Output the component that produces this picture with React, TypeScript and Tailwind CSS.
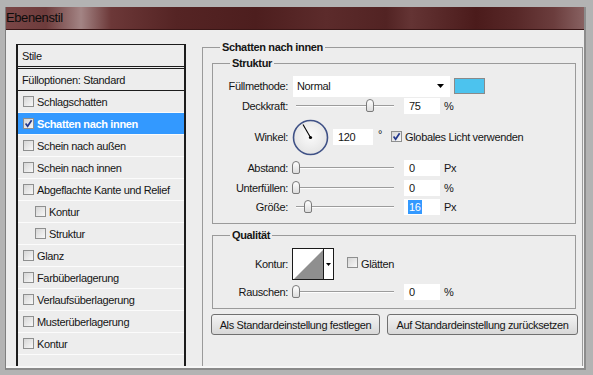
import React from "react";

function Checkbox({ checked = false }: { checked?: boolean }) {
  return (
    <span className="inline-flex h-[11px] w-[11px] shrink-0 items-center justify-center border border-[#8e8f8f] bg-[linear-gradient(135deg,#d6d6d6,#f8f8f8)]">
      {checked && (
        <svg viewBox="0 0 9 9" className="h-[9px] w-[9px]">
          <path d="M1.6 4.6 L3.6 7.2 L7.6 1.2" stroke="#22378c" strokeWidth="1.7" fill="none" />
        </svg>
      )}
    </span>
  );
}

const items: { label: string; checked?: boolean; selected?: boolean; indent?: boolean }[] = [
  { label: "Schlagschatten" },
  { label: "Schatten nach innen", checked: true, selected: true },
  { label: "Schein nach außen" },
  { label: "Schein nach innen" },
  { label: "Abgeflachte Kante und Relief" },
  { label: "Kontur", indent: true },
  { label: "Struktur", indent: true },
  { label: "Glanz" },
  { label: "Farbüberlagerung" },
  { label: "Verlaufsüberlagerung" },
  { label: "Musterüberlagerung" },
  { label: "Kontur" },
];

function Slider({ thumb }: { thumb: string }) {
  return (
    <div className="relative ml-[4px] h-[14px] w-[106px] shrink-0">
      <div className="absolute left-[4px] right-[4px] top-[6px] h-[2px] border-t border-b border-t-[#9c9c9c] border-b-[#fdfdfd]" />
      <div
        className={
          "absolute top-0 h-[13px] w-[8px] rounded-t-[4px] rounded-b-[2px] border border-[#7a7a7a] bg-[linear-gradient(#ffffff,#dcdcdc)] " +
          thumb
        }
      />
    </div>
  );
}

function NumInput({ value, selected = false }: { value: string; selected?: boolean }) {
  return (
    <div className="ml-[6px] flex h-[16px] w-[36px] shrink-0 items-center bg-white pl-[4px]">
      {selected ? <span className="bg-[#3399ff] px-[1px] text-white">{value}</span> : <span className="pl-[1px]">{value}</span>}
    </div>
  );
}

function Label({ children }: { children: React.ReactNode }) {
  return <div className="w-[75px] shrink-0 text-right">{children}</div>;
}

function SliderRow({ label, thumb, value, unit, selected, cls }: { label: string; thumb: string; value: string; unit: string; selected?: boolean; cls: string }) {
  return (
    <div className={"flex h-[18px] items-center " + cls}>
      <Label>{label}</Label>
      <Slider thumb={thumb} />
      <NumInput value={value} selected={selected} />
      <span className="ml-[4px]">{unit}</span>
    </div>
  );
}

function DownArrow() {
  return (
    <svg width="7" height="4" viewBox="0 0 7 4">
      <polygon points="0,0 7,0 3.5,4" fill="#000" />
    </svg>
  );
}

export default function App() {
  return (
    <div className="flex h-[375px] w-[593px] flex-col overflow-hidden bg-[#b3b3b3] pb-[5px] pl-[5px] pr-[7px] pt-[7px] text-[11px] leading-[14px] tracking-[-0.35px] text-[#151515] [font-family:'Liberation_Sans',Arial,sans-serif]">
      <div className="flex flex-1 flex-col overflow-hidden border-b-2 border-l border-r-2 border-b-[#8a8a8a] border-l-[#7f7f7f] border-r-[#8c8c8c]">
        {/* title bar */}
        <div className="flex h-[23px] shrink-0 items-center overflow-hidden border-b border-[#3a1616] bg-[linear-gradient(90deg,#7a4646_0px,#6e3c3c_40px,#a38484_75px,#6c3838_105px,#552424_170px,#4d1e1e_250px,#5c2b2b_320px,#522323_380px,#643434_405px,#4b1b1b_470px,#582828_510px,#6b3d3d_548px,#8a6464_580px)]">
          <span className="ml-[0px] text-[13px] tracking-[-0.4px] text-[#0c0c0c]">Ebenenstil</span>
        </div>
        {/* body */}
        <div className="flex flex-1 items-start overflow-hidden border-b-2 border-[#f7f7f7] bg-[#ededed]">
          {/* left list */}
          <div className="ml-[10px] mt-[14px] h-[340px] w-[170px] shrink-0 border-l-2 border-r-2 border-t border-[#1c1c1c]">
            <div className="flex h-[22px] items-center border-b border-[#1c1c1c] pl-[4px]">Stile</div>
            <div className="mt-[1px] flex h-[23px] items-center border-b border-t border-[#1c1c1c] pl-[4px]">Fülloptionen: Standard</div>
            {items.map((it, i) => (
              <div
                key={i}
                className={
                  "flex h-[22px] items-center gap-[3px] border-b border-[#fbfbfb] " +
                  (it.indent ? "pl-[17px] " : "pl-[5px] ") +
                  (it.selected ? "bg-[#3399ff] font-bold text-white" : "")
                }
              >
                <Checkbox checked={it.checked} />
                <span>{it.label}</span>
              </div>
            ))}
          </div>

          {/* right: Schatten nach innen */}
          <fieldset className="ml-[16px] mt-[10px] h-[340px] w-[381px] shrink-0 border-l border-r border-t border-[#9a9a9a]">
            <legend className="ml-[17px] px-[2px] font-bold leading-[14px]">Schatten nach innen</legend>

            {/* Struktur */}
            <fieldset className="ml-[9px] mr-[6px] mt-[2px] border border-[#9a9a9a] pb-[7px]">
              <legend className="ml-[17px] px-[2px] font-bold leading-[14px]">Struktur</legend>
              <div className="mt-[5px] flex h-[22px] items-center">
                <Label>Füllmethode:</Label>
                <div className="ml-[5px] flex h-[21px] w-[157px] items-center justify-between bg-white pl-[4px] pr-[6px]">
                  <span>Normal</span>
                  <DownArrow />
                </div>
                <div className="ml-[4px] h-[16px] w-[31px] border border-[#8a8a8a] bg-[#4cc3ee]" />
              </div>
              <SliderRow cls="" label="Deckkraft:" thumb="left-[74px]" value="75" unit="%" />
              <div className="flex h-[44px] items-center">
                <Label>Winkel:</Label>
                <svg width="37" height="37" viewBox="0 0 37 37" className="ml-[4px] shrink-0">
                  <defs>
                    <radialGradient id="dialg" cx="50%" cy="45%" r="60%">
                      <stop offset="0" stopColor="#fbfbfb" />
                      <stop offset="1" stopColor="#e2e2e2" />
                    </radialGradient>
                  </defs>
                  <circle cx="18.5" cy="18.5" r="17" fill="url(#dialg)" stroke="#3f5186" strokeWidth="1.6" />
                  <line x1="18.5" y1="18.5" x2="11" y2="5.5" stroke="#000" strokeWidth="1.1" />
                  <circle cx="18.5" cy="18.5" r="1.6" fill="#000" />
                </svg>
                <div className="ml-[4px] flex h-[16px] w-[40px] shrink-0 items-center bg-white pl-[5px]">120</div>
                <span className="mb-[6px] ml-[5px]">°</span>
                <span className="ml-[9px]">
                  <Checkbox checked />
                </span>
                <span className="ml-[3px]">Globales Licht verwenden</span>
              </div>
              <SliderRow cls="" label="Abstand:" thumb="left-[0px]" value="0" unit="Px" />
              <SliderRow cls="mt-[2px]" label="Unterfüllen:" thumb="left-[0px]" value="0" unit="%" />
              <SliderRow cls="mt-[1px]" label="Größe:" thumb="left-[12px]" value="16" unit="Px" selected />
            </fieldset>

            {/* Qualität */}
            <fieldset className="ml-[9px] mr-[6px] mt-[4px] border border-[#9a9a9a] pb-[7px]">
              <legend className="ml-[17px] px-[2px] font-bold leading-[14px]">Qualität</legend>
              <div className="mt-[6px] flex h-[32px] items-center">
                <Label>Kontur:</Label>
                <div className="ml-[4px] flex h-[32px] w-[42px] shrink-0 border border-[#1a1a1a] bg-white">
                  <svg width="30" height="30" viewBox="0 0 30 30">
                    <rect width="30" height="30" fill="#fff" />
                    <polygon points="1,30 30,1 30,30" fill="#8f8f8f" />
                  </svg>
                  <div className="flex flex-1 items-center justify-center border-l border-[#1a1a1a]">
                    <svg width="5" height="3" viewBox="0 0 5 3">
                      <polygon points="0,0 5,0 2.5,3" fill="#000" />
                    </svg>
                  </div>
                </div>
                <span className="ml-[13px]">
                  <Checkbox />
                </span>
                <span className="ml-[3px]">Glätten</span>
              </div>
              <SliderRow cls="mt-[3px]" label="Rauschen:" thumb="left-[0px]" value="0" unit="%" />
            </fieldset>

            {/* buttons */}
            <div className="mt-[5px] flex">
              <button className="ml-[8px] h-[21px] w-[169px] rounded-[3px] border border-[#707070] bg-[linear-gradient(#f3f3f3,#e6e6e6_50%,#d8d8d8)] text-[#151515]">
                Als Standardeinstellung festlegen
              </button>
              <button className="ml-[7px] h-[21px] w-[191px] rounded-[3px] border border-[#707070] bg-[linear-gradient(#f3f3f3,#e6e6e6_50%,#d8d8d8)] text-[#151515]">
                Auf Standardeinstellung zurücksetzen
              </button>
            </div>
          </fieldset>
        </div>
      </div>
    </div>
  );
}
